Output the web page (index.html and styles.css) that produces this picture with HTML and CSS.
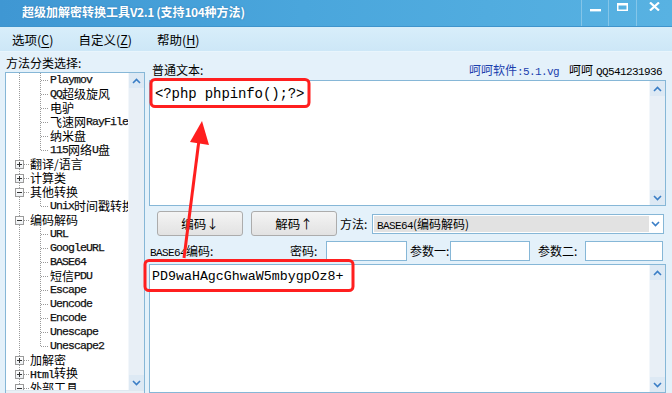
FILE: index.html
```html
<!DOCTYPE html>
<html lang="zh">
<head>
<meta charset="utf-8">
<title>超级加解密转换工具V2.1</title>
<link rel="stylesheet" href="styles.css">
</head>
<body>
<div class="window">
  <div class="titlebar">
    <div class="title">超级加解密转换工具<span class="tl">V2.1 (</span>支持<span class="tl">104</span>种方法<span class="tl">)</span></div>
    <div class="controls">
      <div class="ctl min"><svg width="11" height="3" viewBox="0 0 11 3"><rect x="0" y="0" width="11" height="2.4" fill="#fff"/></svg></div>
      <div class="ctl max"><svg width="11" height="8" viewBox="0 0 11 8"><rect x="0.75" y="0.75" width="9.5" height="6.5" fill="none" stroke="#fff" stroke-width="1.5"/><rect x="0.5" y="0.5" width="10" height="2" fill="#fff"/></svg></div>
      <div class="ctl close"><svg width="11" height="9" viewBox="0 0 11 9"><path d="M1 0.5 L10 8.5 M10 0.5 L1 8.5" stroke="#fff" stroke-width="2.2"/></svg></div>
    </div>
  </div>
  <div class="menubar">
    <span class="menu">选项(<u>C</u>)</span>
    <span class="menu">自定义(<u>Z</u>)</span>
    <span class="menu">帮助(<u>H</u>)</span>
  </div>
  <div class="main">
    <div class="left">
      <div class="label">方法分类选择:</div>
      <div class="treebox">
        <div class="tree-area">
          <div class="tree">
            <div class="row leaf"><span class="en">Playmov</span></div>
            <div class="row leaf"><span class="en">QQ</span>超级旋风</div>
            <div class="row leaf">电驴</div>
            <div class="row leaf">飞速网<span class="en">RayFile</span></div>
            <div class="row leaf">纳米盘</div>
            <div class="row leaf last"><span class="en">115</span>网络<span class="en">U</span>盘</div>
            <div class="row node"><span class="box plus"></span><span class="txt">翻译/语言</span></div>
            <div class="row node"><span class="box plus"></span><span class="txt">计算类</span></div>
            <div class="row node"><span class="box"></span><span class="txt">其他转换</span></div>
            <div class="row leaf last"><span class="en">Unix</span>时间戳转换</div>
            <div class="row node"><span class="box"></span><span class="txt">编码解码</span></div>
            <div class="row leaf"><span class="en">URL</span></div>
            <div class="row leaf"><span class="en">GoogleURL</span></div>
            <div class="row leaf"><span class="en">BASE64</span></div>
            <div class="row leaf">短信<span class="en">PDU</span></div>
            <div class="row leaf"><span class="en">Escape</span></div>
            <div class="row leaf"><span class="en">Uencode</span></div>
            <div class="row leaf"><span class="en">Encode</span></div>
            <div class="row leaf"><span class="en">Unescape</span></div>
            <div class="row leaf last"><span class="en">Unescape2</span></div>
            <div class="row node"><span class="box plus"></span><span class="txt">加解密</span></div>
            <div class="row node"><span class="box plus"></span><span class="txt"><span class="en">Html</span>转换</span></div>
            <div class="row node"><span class="box"></span><span class="txt">外部工具</span></div>
          </div>
          <div class="vscroll">
            <span class="sbtn"><svg width="9" height="6" viewBox="0 0 9 6"><path d="M1 5 L4.5 1.5 L8 5" fill="none" stroke="#3a7ec6" stroke-width="1.6"/></svg></span>
            <span class="sbtn"><svg width="9" height="6" viewBox="0 0 9 6"><path d="M1 1 L4.5 4.5 L8 1" fill="none" stroke="#3a7ec6" stroke-width="1.6"/></svg></span>
          </div>
        </div>
        <div class="hscroll"></div>
      </div>
    </div>
    <div class="right">
      <div class="hdr">
        <span>普通文本:</span>
        <span class="hdr-r"><span class="blue">呵呵软件<span class="en">:5.1.vg</span></span><span class="hehe">呵呵</span><span class="en qq">QQ541231936</span></span>
      </div>
      <div class="ta ta1">
        <div class="ta-text big">&lt;?php phpinfo();?&gt;</div>
        <div class="vscroll">
          <span class="sbtn"><svg width="9" height="6" viewBox="0 0 9 6"><path d="M1 5 L4.5 1.5 L8 5" fill="none" stroke="#3a7ec6" stroke-width="1.6"/></svg></span>
          <span class="sbtn"><svg width="9" height="6" viewBox="0 0 9 6"><path d="M1 1 L4.5 4.5 L8 1" fill="none" stroke="#3a7ec6" stroke-width="1.6"/></svg></span>
        </div>
      </div>
      <div class="btnrow">
        <button class="btn">编码↓</button>
        <button class="btn">解码↑</button>
        <span class="flabel">方法:</span>
        <div class="select">
          <div class="sel-val"><span class="en">BASE64</span>(编码解码)</div>
          <span class="sel-arrow"><svg width="9" height="6" viewBox="0 0 9 6"><path d="M1 1 L4.5 4.5 L8 1" fill="none" stroke="#3a7ec6" stroke-width="1.6"/></svg></span>
        </div>
      </div>
      <div class="row2">
        <span class="l-b64"><span class="en">BASE64</span>编码:</span>
        <span class="l-pw">密码:</span>
        <span class="input in-pw"></span>
        <span class="l-p1">参数一:</span>
        <span class="input in-p1"></span>
        <span class="l-p2">参数二:</span>
        <span class="input in-p2"></span>
      </div>
      <div class="ta ta2">
        <div class="ta-text big2">PD9waHAgcGhwaW5mbygpOz8+</div>
        <div class="vscroll">
          <span class="sbtn"><svg width="9" height="6" viewBox="0 0 9 6"><path d="M1 5 L4.5 1.5 L8 5" fill="none" stroke="#3a7ec6" stroke-width="1.6"/></svg></span>
          <span class="sbtn"><svg width="9" height="6" viewBox="0 0 9 6"><path d="M1 1 L4.5 4.5 L8 1" fill="none" stroke="#3a7ec6" stroke-width="1.6"/></svg></span>
        </div>
      </div>
    </div>
  </div>
  <svg class="annot" width="672" height="393" viewBox="0 0 672 393">
    <rect x="151" y="79.5" width="158" height="27" rx="4" fill="none" stroke="#ff1f1f" stroke-width="3"/>
    <rect x="145" y="260.5" width="208" height="30" rx="4" fill="none" stroke="#ff1f1f" stroke-width="3"/>
    <path d="M184 258 L199 140" stroke="#ff1f1f" stroke-width="3" fill="none"/>
    <polygon points="202,121 209,145 190,142" fill="#ff1f1f"/>
  </svg>
</div>
</body>
</html>
```
FILE: styles.css
```css
html, body {
  margin: 0;
  padding: 0;
}
body {
  width: 672px;
  height: 393px;
  overflow: hidden;
  font-family: "Noto Sans CJK SC", "Noto Sans", sans-serif;
  font-size: 12px;
  color: #000;
}
.window {
  position: relative;
  width: 672px;
  height: 393px;
  display: flex;
  flex-direction: column;
  background: #e4f1fa;
  overflow: hidden;
}
.titlebar {
  height: 27px;
  flex: none;
  display: flex;
  justify-content: space-between;
  background: linear-gradient(to right, #3f97d3 0%, #4aa6dc 45%, #58b2e2 100%);
  border-bottom: 1px solid #3f94cc;
  box-sizing: border-box;
}
.title {
  padding-left: 22px;
  line-height: 24px;
  color: #fff;
  font-weight: bold;
  font-size: 12px;
  white-space: nowrap;
  text-shadow: 0 0 2px rgba(20, 70, 120, 0.35);
}
.title .tl {
  letter-spacing: -0.4px;
}
.controls {
  display: flex;
  height: 26px;
}
.ctl {
  display: flex;
  justify-content: center;
  align-items: flex-start;
  border-left: 1px solid rgba(255, 255, 255, 0.28);
  box-sizing: border-box;
}
.ctl.min { width: 27px; padding-top: 9px; }
.ctl.max { width: 28px; padding-top: 3px; }
.ctl.close { width: 36px; padding-top: 2px; }
.menubar {
  height: 25px;
  flex: none;
  display: flex;
  align-items: center;
  gap: 25px;
  padding-left: 12px;
  background: linear-gradient(to bottom, #d8eefa, #cde7f7);
  border-bottom: 1px solid #e9f5fc;
  box-sizing: border-box;
  font-size: 12.5px;
}
.menu u {
  text-underline-offset: 2px;
}
.main {
  flex: 1;
  display: flex;
  padding-left: 5px;
  gap: 4px;
  min-height: 0;
}
.left {
  width: 140px;
  flex: none;
  display: flex;
  flex-direction: column;
}
.left .label {
  margin-top: 4px;
  height: 14px;
  line-height: 14px;
  padding-left: 1px;
}
.treebox {
  margin-top: 2px;
  height: 340px;
  flex: none;
  border: 1px solid #86b7d7;
  background: #fff;
  display: flex;
  flex-direction: column;
}
.tree-area {
  height: 317px;
  flex: none;
  display: flex;
}
.tree {
  flex: 1;
  overflow: hidden;
}
.hscroll {
  height: 17px;
  background: #e9f0f6;
  border-top: 1px solid #dfe8f0;
}
.row {
  height: 14px;
  line-height: 14px;
  display: flex;
  align-items: center;
  white-space: nowrap;
  background-repeat: no-repeat;
}
.en {
  font-family: "Liberation Mono", monospace;
  font-size: 11px;
  letter-spacing: -0.6px;
}
.tree .en {
  font-size: 11.5px;
  letter-spacing: -0.9px;
  color: #111;
  -webkit-text-stroke: 0.25px #111;
}
.leaf {
  padding-left: 44px;
  background-image:
    repeating-linear-gradient(to bottom, #9a9a9a 0 1px, transparent 1px 2px),
    repeating-linear-gradient(to bottom, #9a9a9a 0 1px, transparent 1px 2px),
    repeating-linear-gradient(to right, #9a9a9a 0 1px, transparent 1px 2px);
  background-size: 1px 14px, 1px 14px, 8px 1px;
  background-position: 13px 0, 34px 0, 35px 7px;
}
.leaf.last {
  background-size: 1px 14px, 1px 8px, 8px 1px;
}
.node {
  padding-left: 9px;
  background-image:
    repeating-linear-gradient(to bottom, #9a9a9a 0 1px, transparent 1px 2px),
    repeating-linear-gradient(to right, #9a9a9a 0 1px, transparent 1px 2px);
  background-size: 1px 14px, 5px 1px;
  background-position: 13px 0, 18px 7px;
}
.box {
  position: relative;
  width: 9px;
  height: 9px;
  box-sizing: border-box;
  border: 1px solid #9b9b9b;
  background: linear-gradient(to bottom, #fff, #eceff2);
  flex: none;
}
.box::before {
  content: "";
  position: absolute;
  left: 1px;
  top: 3px;
  width: 5px;
  height: 1px;
  background: #333;
}
.box.plus::after {
  content: "";
  position: absolute;
  left: 3px;
  top: 1px;
  width: 1px;
  height: 5px;
  background: #333;
}
.node .txt {
  margin-left: 6px;
}
.vscroll {
  width: 15px;
  flex: none;
  display: flex;
  flex-direction: column;
  justify-content: space-between;
  background: #e8eff6;
  border-left: 1px solid #f3f7fb;
}
.sbtn {
  height: 15px;
  display: flex;
  align-items: center;
  justify-content: center;
  background: #dde9f4;
}
.right {
  width: 517px;
  flex: none;
  display: flex;
  flex-direction: column;
}
.hdr {
  height: 28px;
  box-sizing: border-box;
  padding: 11px 4px 0 3px;
  line-height: 14px;
  display: flex;
  justify-content: space-between;
  white-space: nowrap;
}
.blue {
  color: #1b3fae;
}
.hehe {
  margin-left: 10px;
}
.qq {
  margin-left: 3px;
}
.ta {
  border: 1px solid #86b7d7;
  background: #fff;
  display: flex;
  box-sizing: border-box;
}
.ta1 {
  height: 126px;
  flex: none;
}
.ta2 {
  margin-top: 3px;
  height: 129px;
  flex: none;
}
.ta-text {
  flex: 1;
  white-space: nowrap;
  font-family: "Liberation Mono", monospace;
  line-height: 16px;
}
.big {
  font-size: 14px;
  letter-spacing: -0.1px;
  padding: 5px 0 0 5px;
}
.big2 {
  font-size: 13.3px;
  padding: 4px 0 0 2px;
}
.btnrow {
  margin-top: 5px;
  height: 25px;
  display: flex;
  align-items: center;
  padding-left: 8px;
  padding-right: 2px;
}
.btn {
  width: 86px;
  height: 25px;
  margin: 0 8px 0 0;
  padding: 0;
  border: 1px solid #acacac;
  border-radius: 3px;
  background: linear-gradient(to bottom, #f4f4f4, #e2e2e2);
  font-family: "Noto Sans CJK SC", sans-serif;
  font-size: 12.5px;
  color: #000;
}
.btn:last-of-type {
  margin-right: 3px;
}
.flabel {
  width: 32px;
  flex: none;
}
.select {
  flex: 1;
  height: 20px;
  box-sizing: border-box;
  border: 1px solid #86b7d7;
  background: #fff;
  display: flex;
  align-items: stretch;
  padding: 1px;
}
.sel-val {
  flex: 1;
  background: #e2e2e2;
  line-height: 16px;
  padding-left: 3px;
  white-space: nowrap;
}
.sel-arrow {
  width: 13px;
  display: flex;
  align-items: center;
  justify-content: center;
}
.row2 {
  margin-top: 4px;
  height: 21px;
  display: flex;
  align-items: center;
  white-space: nowrap;
}
.l-b64 { width: 140px; padding-left: 1px; flex: none; }
.l-pw { width: 36px; flex: none; }
.l-p1 { width: 40px; margin-left: 3px; flex: none; }
.l-p2 { width: 47px; margin-left: 8px; flex: none; }
.input {
  height: 20px;
  box-sizing: border-box;
  border: 1px solid #86b7d7;
  background: #fff;
  flex: none;
}
.in-pw { width: 81px; }
.in-p1 { width: 80px; }
.in-p2 { width: 78px; }
.annot {
  position: absolute;
  left: 0;
  top: 0;
  pointer-events: none;
}
```
